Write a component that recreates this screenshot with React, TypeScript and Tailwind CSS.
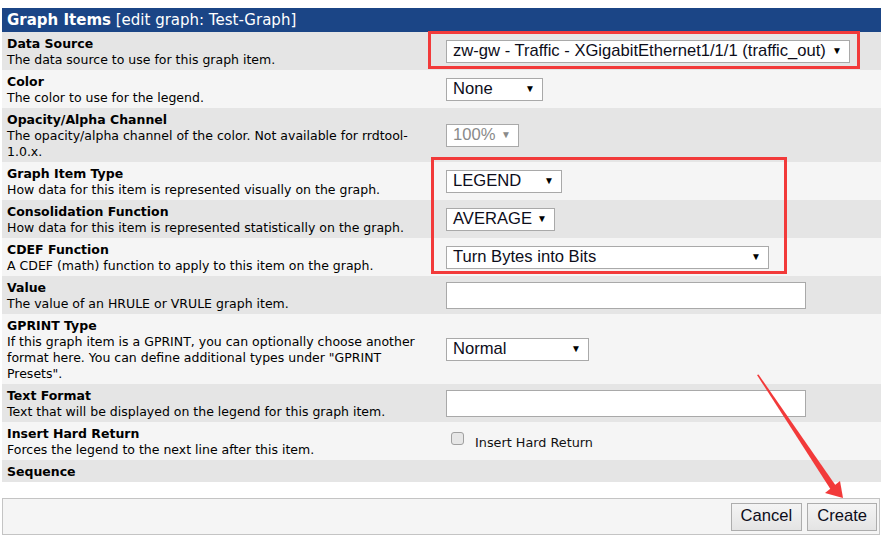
import React from 'react';

const FONT = { fontFamily: '"DejaVu Sans", Verdana, sans-serif' };

type Row = {
  label: string;
  desc?: string;
  bg: string;
  control?: React.ReactNode;
};

const Select = ({ text, width, disabled }: { text: string; width: string; disabled?: boolean }) => (
  <div
    className={`flex items-center justify-between h-[23px] bg-white border border-[#a9a9a9] pl-[6px] pr-[7px] text-[16.6px] font-['Liberation_Sans',Arial,sans-serif] ${width} ${
      disabled ? 'text-[#8a8a8a]' : 'text-[#0d0d1a]'
    }`}
  >
    <span className="leading-none whitespace-nowrap">{text}</span>
    <span className={`text-[10px] leading-none ${disabled ? 'text-[#8a8a8a]' : 'text-black'}`}>▼</span>
  </div>
);

const TextInput = () => <div className="h-[27px] w-[360px] bg-white border border-[#a9a9a9]" />;

const rows: Row[] = [
  {
    label: 'Data Source',
    desc: 'The data source to use for this graph item.',
    bg: 'bg-[#e5e5e5]',
    control: <Select text="zw-gw - Traffic - XGigabitEthernet1/1/1 (traffic_out)" width="w-[404px]" />,
  },
  {
    label: 'Color',
    desc: 'The color to use for the legend.',
    bg: 'bg-[#f5f5f5]',
    control: <Select text="None" width="w-[97px]" />,
  },
  {
    label: 'Opacity/Alpha Channel',
    desc: 'The opacity/alpha channel of the color. Not available for rrdtool-1.0.x.',
    bg: 'bg-[#e5e5e5]',
    control: <Select text="100%" width="w-[73px]" disabled />,
  },
  {
    label: 'Graph Item Type',
    desc: 'How data for this item is represented visually on the graph.',
    bg: 'bg-[#f5f5f5]',
    control: <Select text="LEGEND" width="w-[116px]" />,
  },
  {
    label: 'Consolidation Function',
    desc: 'How data for this item is represented statistically on the graph.',
    bg: 'bg-[#e5e5e5]',
    control: <Select text="AVERAGE" width="w-[109px]" />,
  },
  {
    label: 'CDEF Function',
    desc: 'A CDEF (math) function to apply to this item on the graph.',
    bg: 'bg-[#f5f5f5]',
    control: <Select text="Turn Bytes into Bits" width="w-[323px]" />,
  },
  {
    label: 'Value',
    desc: 'The value of an HRULE or VRULE graph item.',
    bg: 'bg-[#e5e5e5]',
    control: <TextInput />,
  },
  {
    label: 'GPRINT Type',
    desc: 'If this graph item is a GPRINT, you can optionally choose another format here. You can define additional types under "GPRINT Presets".',
    bg: 'bg-[#f5f5f5]',
    control: <Select text="Normal" width="w-[143px]" />,
  },
  {
    label: 'Text Format',
    desc: 'Text that will be displayed on the legend for this graph item.',
    bg: 'bg-[#e5e5e5]',
    control: <TextInput />,
  },
  {
    label: 'Insert Hard Return',
    desc: 'Forces the legend to the next line after this item.',
    bg: 'bg-[#f5f5f5]',
    control: (
      <div className="flex items-start pl-[5px]">
        <div className="w-[13px] h-[13px] rounded-[3px] border border-[#a0a0a0] bg-[#e6e6e6]" />
        <span className="ml-[11px] mt-[3px] text-[12.8px] leading-[15px] text-[#111]">Insert Hard Return</span>
      </div>
    ),
  },
  {
    label: 'Sequence',
    bg: 'bg-[#e5e5e5]',
  },
];

export default function App() {
  return (
    <div className="relative w-[883px] h-[539px] overflow-hidden bg-white text-black" style={FONT}>
      <div className="pt-[8px] pl-[2px] w-[881px]">
        <div className="h-[24px] bg-[#1b4586] text-white text-[15px] leading-[24px] pl-[5px] whitespace-nowrap">
          <span className="font-bold">Graph Items</span> [edit graph: Test-Graph]
        </div>
        {rows.map((r) => (
          <div key={r.label} className={`grid grid-cols-[438px_1fr] ${r.bg}`}>
            <div className="pl-[5px] pr-[10px] pt-[4px] pb-[2px] text-[12.5px] leading-[16px]">
              <div className="font-bold">{r.label}</div>
              {r.desc && <div>{r.desc}</div>}
            </div>
            <div className="flex items-center pl-[6px]">{r.control}</div>
          </div>
        ))}
        <div className="mt-[16px] h-[37px] w-[878px] border border-[#c4c4c4] bg-[#f5f5f5] flex items-center justify-end gap-[5px] pr-[2px]">
          {['Cancel', 'Create'].map((b) => (
            <div
              key={b}
              className="h-[28px] px-[9px] flex items-center border border-[#adadad] bg-gradient-to-b from-[#f4f4f4] to-[#e4e4e4] text-[16.6px] text-[#0d0d1a] font-['Liberation_Sans',Arial,sans-serif]"
            >
              {b}
            </div>
          ))}
        </div>
      </div>

      {/* annotation overlays */}
      <div className="absolute left-[428px] top-[31px] w-[432px] h-[38px] border-[3px] border-[#f23a3a]" />
      <div className="absolute left-[431px] top-[157px] w-[356px] h-[117px] border-[3px] border-[#f23a3a]" />
      <svg className="absolute left-0 top-0 pointer-events-none" width="883" height="539">
        <polygon points="757,375 758.5,374.5 836,486 831,490" fill="#f23a3a" />
        <polygon points="825,493 840,481 843,498" fill="#f23a3a" />
      </svg>
    </div>
  );
}
